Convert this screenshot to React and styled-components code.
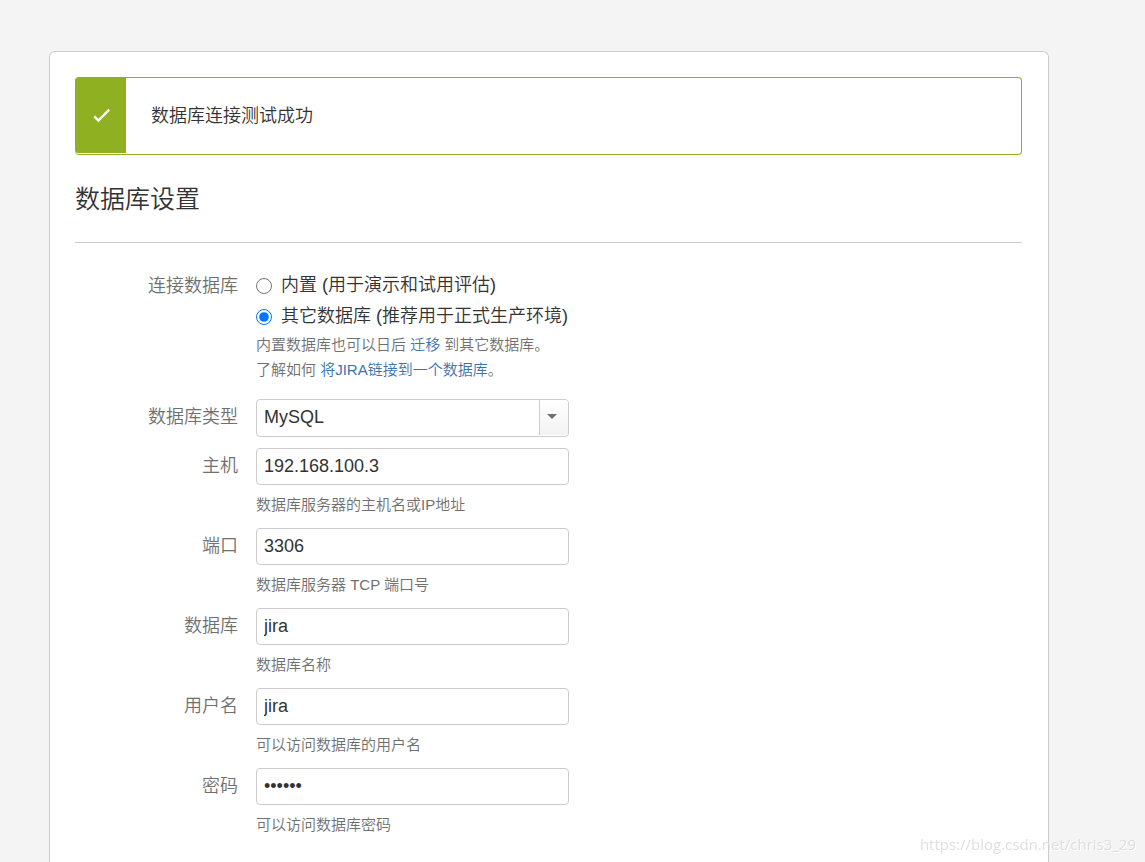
import React, { useState } from "react";
import styled, { createGlobalStyle } from "styled-components";

const GlobalStyle = createGlobalStyle`
  * {
    box-sizing: border-box;
  }

  body {
    margin: 0;
    background: #f4f4f4;
    color: #333;
    font-family: "Liberation Sans", "Noto Sans CJK SC", sans-serif;
    font-size: 18px;
    font-weight: 350;
  }
`;

const Page = styled.div`
  display: flex;
  flex-direction: column;
  min-height: 100vh;
  padding: 51px 49px 0;
`;

const Panel = styled.main`
  flex: 1;
  width: 100%;
  max-width: 1000px;
  padding: 25px 26px 20px 25px;
  background: #fff;
  border: 1px solid #ccc;
  border-bottom: 0;
  border-radius: 6px 6px 0 0;
`;

const Message = styled.div`
  display: flex;
  min-height: 78px;
  padding-bottom: 1px;
  border: 1px solid #8eb021;
  border-left: 0;
  border-radius: 4px;
`;

const MessageIcon = styled.div`
  display: flex;
  align-items: center;
  justify-content: center;
  width: 51px;
  background: #8eb021;
  border-radius: 3px 0 0 3px;
`;

const MessageText = styled.p`
  align-self: center;
  margin: 0;
  padding: 0 25px 4px;
`;

const Title = styled.h1`
  margin: 24px 0 27px;
  padding-bottom: 23px;
  border-bottom: 1px solid #ccc;
  font-size: 25px;
  font-weight: 350;
  line-height: 40px;
`;

const Form = styled.form`
  display: flex;
  flex-direction: column;
  gap: 11px;
`;

const Row = styled.div`
  display: grid;
  grid-template-columns: 163px minmax(0, 1fr);
  column-gap: 18px;
`;

const RadioGroup = styled.div`
  padding-bottom: 6px;
`;

const Label = styled.label`
  color: #707070;
  line-height: ${(props) => (props.$short ? "32px" : "36px")};
  text-align: right;
`;

const RadioLabel = styled.label`
  display: flex;
  align-items: center;
  gap: 9px;
  line-height: 31px;
  white-space: nowrap;
`;

const Radio = styled.input`
  width: 16px;
  height: 16px;
  margin: 0;
`;

const Help = styled.p`
  margin: ${(props) => (props.$flush ? "0" : "7px 0 0")};
  color: #707070;
  font-size: 15px;
  line-height: 25px;
`;

const Link = styled.a`
  color: #3b73af;
  text-decoration: none;
`;

const Input = styled.input`
  display: block;
  width: 100%;
  max-width: 313px;
  height: 37px;
  padding: 0 7px;
  background: #fff;
  border: 1px solid #ccc;
  border-radius: 4px;
  color: #333;
  font: inherit;
`;

const SelectBox = styled.div`
  position: relative;
  max-width: 313px;
`;

const Select = styled.select`
  display: block;
  width: 100%;
  height: 38px;
  padding: 0 36px 2px 7px;
  appearance: none;
  background: #fff;
  border: 1px solid #ccc;
  border-radius: 4px;
  color: #333;
  font: inherit;
`;

const Arrow = styled.span`
  position: absolute;
  top: 1px;
  right: 1px;
  bottom: 2px;
  display: flex;
  align-items: center;
  width: 29px;
  padding: 0 0 2px 7px;
  background: linear-gradient(#fff, #f2f2f2);
  border-left: 1px solid #ccc;
  border-radius: 0 3px 3px 0;
  pointer-events: none;
`;

const Watermark = styled.div`
  position: fixed;
  right: 9px;
  bottom: 8px;
  color: rgba(215, 215, 215, 0.8);
  font-family: "Open Sans", sans-serif;
  font-size: 15px;
  font-weight: 400;
  line-height: 20px;
  text-shadow: 1px 1px 0 #fff;
`;

const fields = [
  {
    id: "host",
    label: "主机",
    value: "192.168.100.3",
    help: "数据库服务器的主机名或IP地址",
  },
  { id: "port", label: "端口", value: "3306", help: "数据库服务器 TCP 端口号" },
  { id: "database", label: "数据库", value: "jira", help: "数据库名称" },
  { id: "username", label: "用户名", value: "jira", help: "可以访问数据库的用户名" },
  {
    id: "password",
    label: "密码",
    value: "secret",
    help: "可以访问数据库密码",
    type: "password",
  },
];

const Field = ({ id, label, value, help, type = "text" }) => (
  <Row>
    <Label htmlFor={id}>{label}</Label>
    <div>
      <Input id={id} name={id} type={type} defaultValue={value} />
      <Help>{help}</Help>
    </div>
  </Row>
);

export default () => {
  const [mode, setMode] = useState("external");

  return (
    <>
      <GlobalStyle />
      <Page>
        <Panel>
          <Message role="status">
            <MessageIcon>
              <svg width="20" height="18" viewBox="0 0 20 18" aria-hidden="true">
                <path
                  d="M3.3 9.4 L7.4 13.6 L18.2 2.6"
                  fill="none"
                  stroke="#fff"
                  strokeWidth="2.4"
                />
              </svg>
            </MessageIcon>
            <MessageText>数据库连接测试成功</MessageText>
          </Message>
          <Title>数据库设置</Title>
          <Form>
            <Row role="radiogroup" aria-labelledby="mode-label">
              <Label as="span" id="mode-label" $short>
                连接数据库
              </Label>
              <RadioGroup>
                <RadioLabel>
                  <Radio
                    type="radio"
                    name="mode"
                    checked={mode === "internal"}
                    onChange={() => setMode("internal")}
                  />
                  内置 (用于演示和试用评估)
                </RadioLabel>
                <RadioLabel>
                  <Radio
                    type="radio"
                    name="mode"
                    checked={mode === "external"}
                    onChange={() => setMode("external")}
                  />
                  其它数据库 (推荐用于正式生产环境)
                </RadioLabel>
                <Help $flush>
                  内置数据库也可以日后 <Link href="#migrate">迁移</Link> 到其它数据库。
                </Help>
                <Help $flush>
                  了解如何 <Link href="#connect">将JIRA链接到一个数据库</Link>。
                </Help>
              </RadioGroup>
            </Row>
            <Row>
              <Label htmlFor="type">数据库类型</Label>
              <SelectBox>
                <Select id="type" name="type" defaultValue="mysql">
                  <option value="mysql">MySQL</option>
                  <option value="postgresql">PostgreSQL</option>
                  <option value="oracle">Oracle</option>
                </Select>
                <Arrow>
                  <svg width="10" height="5" viewBox="0 0 10 5" aria-hidden="true">
                    <path d="M0 0H10L5 5Z" fill="#707070" />
                  </svg>
                </Arrow>
              </SelectBox>
            </Row>
            {fields.map((field) => (
              <Field key={field.id} {...field} />
            ))}
          </Form>
        </Panel>
      </Page>
      <Watermark>https://blog.csdn.net/chris3_29</Watermark>
    </>
  );
};
